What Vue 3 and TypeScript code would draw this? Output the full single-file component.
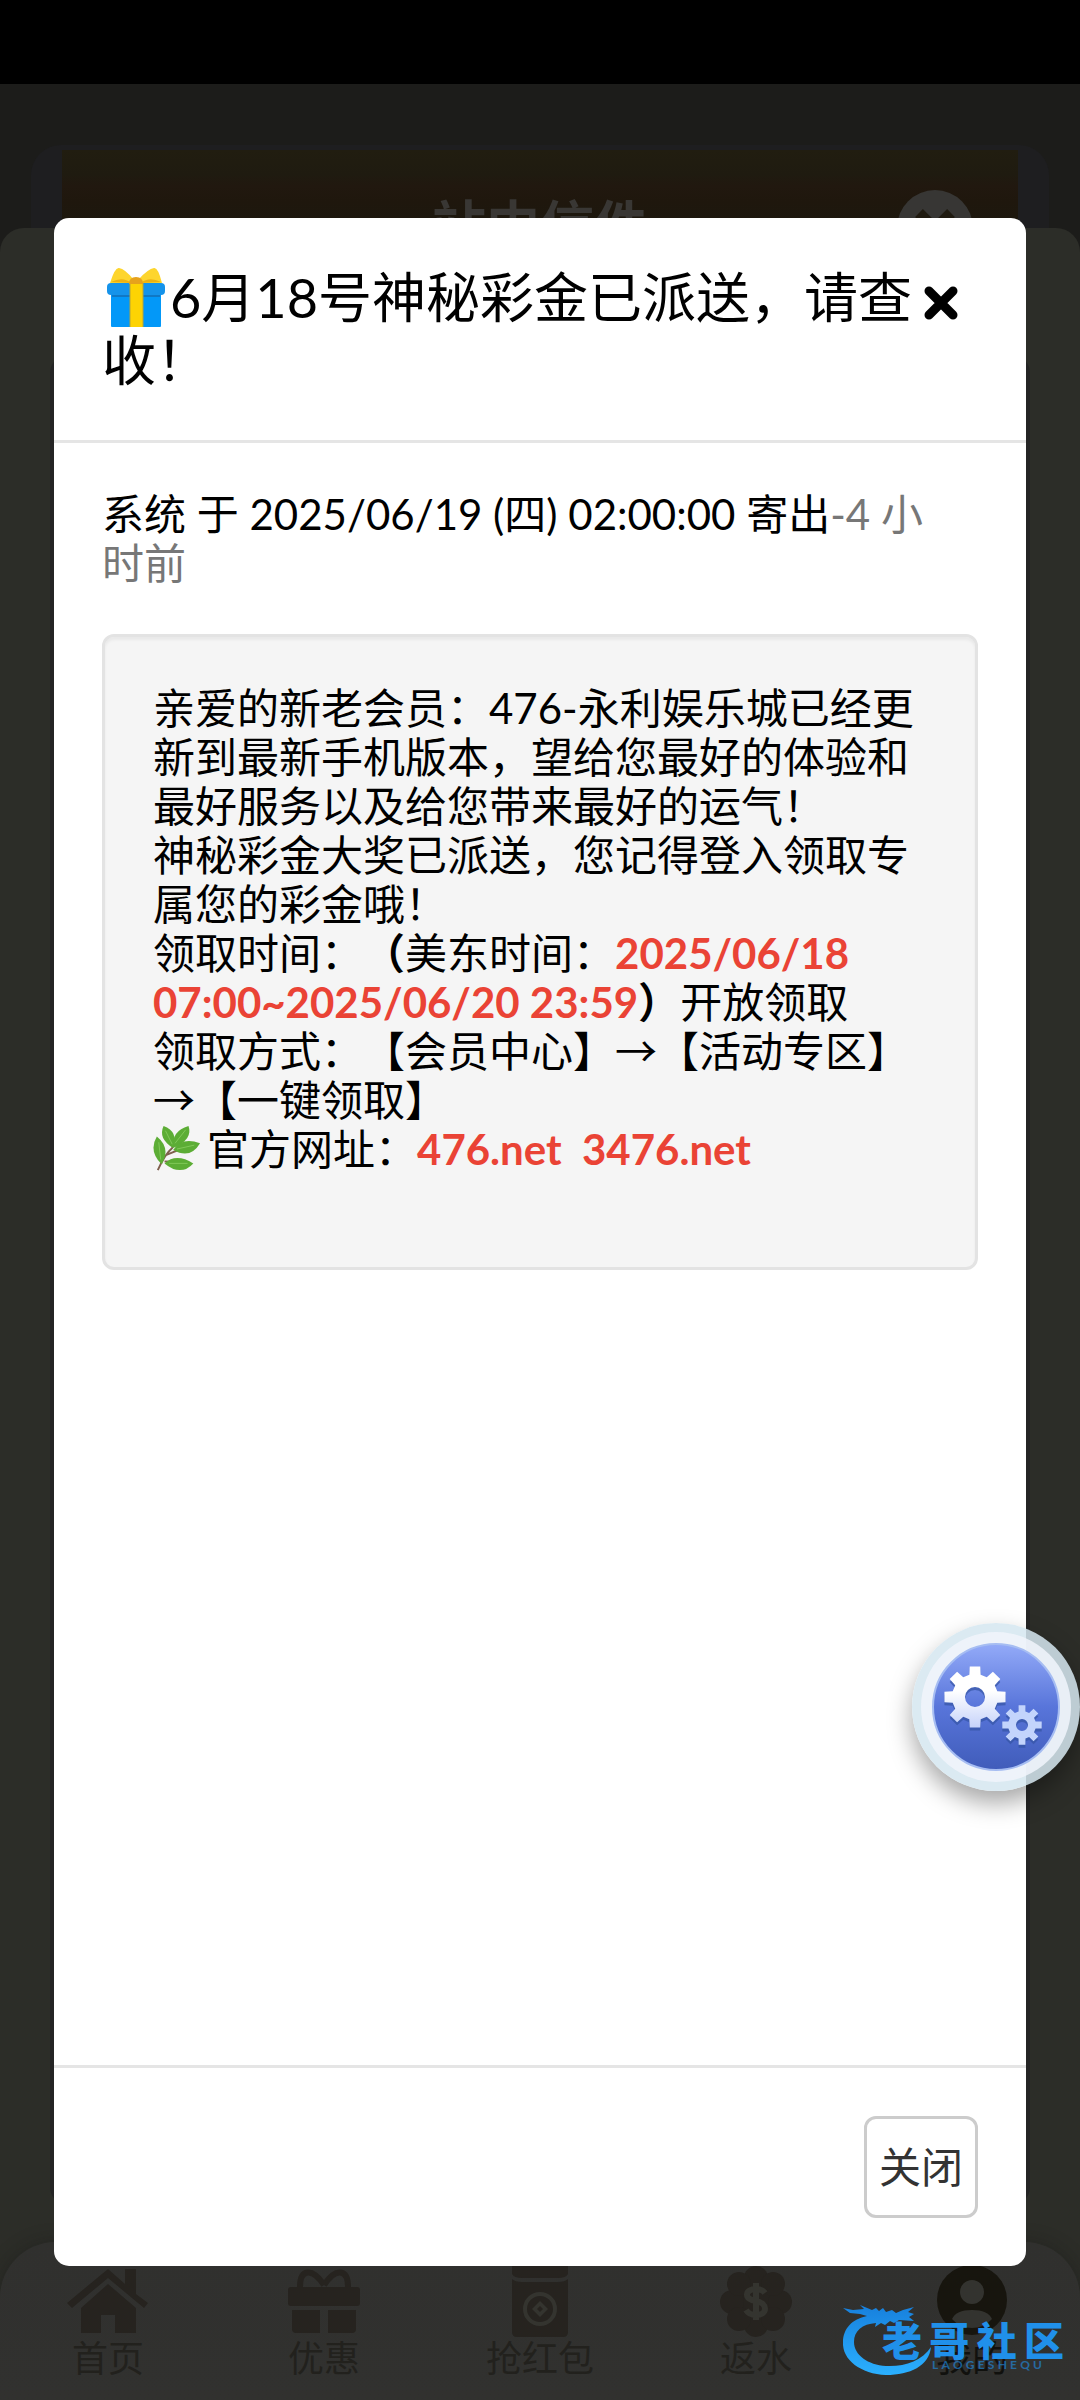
<script setup lang="ts">
interface NavItem {
  key: string
  label: string
  active?: boolean
}

const navItems: NavItem[] = [
  { key: 'home', label: '首页' },
  { key: 'gift', label: '优惠' },
  { key: 'packet', label: '抢红包' },
  { key: 'rebate', label: '返水' },
  { key: 'me', label: '我的', active: true },
]

const brandChars: string[] = [...'老哥社区']
const brandLatin: string[] = [...'LAOGESHEQU']

// Outline of a toothed wheel with a round hole in the middle
function gear(cx: number, cy: number, outer: number, root: number, hole: number): string {
  const teeth = 8
  const pts: string[] = []
  const at = (r: number, a: number) =>
    `${(cx + r * Math.sin(a)).toFixed(2)} ${(cy - r * Math.cos(a)).toFixed(2)}`
  for (let i = 0; i < teeth; i++) {
    const a = (i * 2 * Math.PI) / teeth
    pts.push(at(root, a - 0.25), at(outer, a - 0.17), at(outer, a + 0.17), at(root, a + 0.25))
  }
  return (
    `M${pts.join('L')}Z` +
    `M${cx - hole} ${cy}a${hole} ${hole} 0 1 0 ${hole * 2} 0a${hole} ${hole} 0 1 0 ${-hole * 2} 0Z`
  )
}

const bigGear = gear(63, 74, 31, 23, 10)
const smallGear = gear(110, 102, 20, 14, 6)
</script>

<template>
  <div class="screen">
    <div class="page">
      <div class="status"></div>
      <header class="mail">
        <div class="mail-bar">
          <h1>站内信件</h1>
          <button class="mail-close" type="button" aria-label="关闭信件">
            <svg viewBox="0 0 76 76" width="76" height="76">
              <circle cx="38" cy="38" r="38" fill="#373634" />
              <path d="M22 23L54 55M54 23L22 55" stroke="#1f1a10" stroke-width="11" />
            </svg>
          </button>
        </div>
      </header>
      <main class="sheet">
        <div class="card"></div>
        <nav class="nav">
          <a v-for="n in navItems" :key="n.key" href="#" :class="{ active: n.active }">
            <svg v-if="n.key === 'home'" viewBox="0 0 84 72" width="84" height="72">
              <path d="M42 3L59 18V3H70V28L82 37L78 42L42 12L6 42L1 37Z" />
              <path d="M42 18L70 42V67H49V49H35V67H15V42Z" />
            </svg>
            <svg v-else-if="n.key === 'gift'" viewBox="0 0 84 72" width="84" height="72">
              <path d="M42 19C30 1 18 3 18 21M42 19C54 1 66 3 66 21" fill="none" stroke="#26231f" stroke-width="6" />
              <rect x="6" y="21" width="72" height="19" rx="3" />
              <path d="M10 44H38V67H14Q10 67 10 63ZM46 44H74V63Q74 67 70 67H46Z" />
            </svg>
            <svg v-else-if="n.key === 'packet'" viewBox="0 0 84 72" width="84" height="72">
              <path d="M14 0H70V8Q68 12 60 12H24Q16 12 14 8Z" />
              <path d="M14 13Q17 16 24 16H60Q67 16 70 13V66Q70 71 65 71H19Q14 71 14 66Z" />
              <circle cx="42" cy="43" r="15" fill="none" stroke="#34342f" stroke-width="4" />
              <path d="M42 35L50 43L42 51L34 43Z" fill="#34342f" />
              <path d="M42 40L45 43L42 46L39 43Z" />
            </svg>
            <svg v-else-if="n.key === 'rebate'" viewBox="0 0 84 72" width="84" height="72">
              <circle cx="42" cy="35" r="28" />
              <circle cx="42" cy="12" r="12" />
              <circle cx="42" cy="59" r="12" />
              <circle cx="18" cy="36" r="12" />
              <circle cx="66" cy="36" r="12" />
              <circle cx="25" cy="18" r="12" />
              <circle cx="59" cy="18" r="12" />
              <circle cx="25" cy="53" r="12" />
              <circle cx="59" cy="53" r="12" />
              <path d="M51 27Q48 23 42 23C30 23 30 34 42 35C54 37 54 49 42 49Q35 49 32 44M42 17V54" fill="none" stroke="#34342f" stroke-width="6" />
            </svg>
            <svg v-else viewBox="0 0 84 72" width="84" height="72">
              <circle cx="42" cy="34" r="35" />
              <circle cx="42" cy="26" r="12" fill="#33332f" />
              <path d="M22 53Q26 44 42 44Q58 44 62 53Q54 62 42 62Q30 62 22 53Z" fill="#33332f" />
            </svg>
            <span>{{ n.label }}</span>
          </a>
        </nav>
      </main>
    </div>

    <section class="modal" role="dialog" aria-labelledby="mail-title">
      <div class="modal-head">
        <h2 id="mail-title">
          <svg class="gift" viewBox="0 0 60 60" width="60" height="60" role="img" aria-label="礼物">
            <rect x="5" y="22" width="50" height="38" rx="1" fill="#0398f8" />
            <rect x="1" y="16" width="58" height="12" rx="4" fill="#1593ea" />
            <rect x="6" y="28" width="48" height="2" fill="#1078c4" />
            <rect x="24" y="14" width="13" height="46" fill="#fdd303" />
            <path d="M24 16V60M37 16V60" stroke="#b5a43a" stroke-width="1" />
            <path d="M27 12Q19 2 13 1Q9 0 4 16H27ZM33 12Q42 2 48 1Q52 0 56 16H33Z" fill="#fdd52d" />
            <path d="M5 15Q17 9 25 16ZM55 15Q43 9 35 16Z" fill="#eeb211" />
            <path d="M23 17Q23 10 30 10Q37 10 37 17Z" fill="#e6a21c" />
          </svg>6月18号神秘彩金已派送，请查<br />收！
        </h2>
        <button class="close" type="button" aria-label="关闭">
          <svg viewBox="0 0 34 34" width="34" height="34">
            <path d="M5 5L29 29M29 5L5 29" stroke="#000" stroke-width="9" stroke-linecap="round" />
          </svg>
        </button>
      </div>

      <div class="modal-body">
        <p class="meta">系统 于 2025/06/19 (四) 02:00:00 寄出<span>-4 小<br />时前</span></p>
        <div class="well">
          亲爱的新老会员：476-永利娱乐城已经更<br />
          新到最新手机版本，望给您最好的体验和<br />
          最好服务以及给您带来最好的运气！<br />
          神秘彩金大奖已派送，您记得登入领取专<br />
          属您的彩金哦！<br />
          领取时间：<b>（</b>美东时间：<strong>2025/06/18</strong><br />
          <strong>07:00~2025/06/20 23:59</strong><b>）</b>开放领取<br />
          领取方式：【会员中心】<i>→</i>【活动专区】<br />
          <i>→</i>【一键领取】<br />
          <svg class="leaf" viewBox="0 0 50 50" width="48" height="48" role="img" aria-label="香草">
            <path d="M5 47Q12 31 20 24Q22 20 22 17M14 31Q30 24 45 20M12 38Q24 38 36 39M6 27Q9 36 9 40" fill="none" stroke="#80604f" stroke-width="2" />
            <g fill="#5cad35">
              <path d="M21 24Q5 14 11 1Q27 7 21 24Z" />
              <path d="M21 24Q19 6 37 1Q42 15 21 24Z" />
              <path d="M21 26Q30 12 49 19Q39 36 21 26Z" />
              <path d="M12 40Q24 29 42 40Q29 54 12 40Z" />
              <path d="M9 41Q-5 27 4 12Q19 24 9 41Z" />
            </g>
            <path d="M20 20L13 6M23 19L34 5M25 25L43 21M17 40H36M8 36L6 18" stroke="#82c95a" stroke-width="1" />
          </svg>官方网址：<strong>476.net&nbsp; 3476.net</strong>
        </div>
      </div>

      <div class="modal-foot">
        <button class="btn" type="button">关闭</button>
      </div>
    </section>

    <button class="float" type="button" aria-label="设置">
      <svg viewBox="0 0 168 168" width="168" height="168">
        <defs>
          <linearGradient id="disc" x1="0" y1="0" x2="0" y2="1">
            <stop offset="0" stop-color="#93aaf8" />
            <stop offset="0.5" stop-color="#5875da" />
            <stop offset="1" stop-color="#405cba" />
          </linearGradient>
          <linearGradient id="steel" x1="0" y1="0" x2="0" y2="1">
            <stop offset="0.4" stop-color="#fff" />
            <stop offset="1" stop-color="#c5d2fa" />
          </linearGradient>
        </defs>
        <circle cx="84" cy="84" r="84" fill="#d5e7f0" fill-opacity="0.86" />
        <circle cx="84" cy="84" r="75" fill="#f1f5fb" fill-opacity="0.85" />
        <circle cx="84" cy="84" r="63" fill="url(#disc)" stroke="#a6bdf2" stroke-width="2" />
        <g transform="translate(0 3)" fill="#3454a4" fill-opacity="0.7" fill-rule="evenodd">
          <path :d="bigGear" />
          <path :d="smallGear" />
        </g>
        <path :d="bigGear" fill="url(#steel)" fill-rule="evenodd" />
        <path :d="smallGear" fill="#c3d4fc" fill-rule="evenodd" />
      </svg>
    </button>

    <div class="brand">
      <svg viewBox="0 0 110 84" width="110" height="84">
        <defs>
          <linearGradient id="dragon" x1="0" y1="0" x2="0" y2="1">
            <stop offset="0" stop-color="#1780dd" />
            <stop offset="1" stop-color="#2bb0ff" />
          </linearGradient>
        </defs>
        <path fill="url(#dragon)" d="M1 4L11 6L22 5L18 1L30 6L34 4L37 7L41 4L44 8L50 6L54 9L61 6L72 3L66 8L72 10L67 13L72 17L57 16L52 19L48 17L43 21L39 19L33 23L34 19C20 20 12 27 12 38C12 51 26 61 44 62C62 63 80 57 89 43C87 62 68 71 44 71C19 70 0 56 1 38C1 25 10 15 25 12L18 10L8 9Z" />
      </svg>
      <div class="brand-text">
        <div class="brand-cn"><span v-for="(c, i) in brandChars" :key="i">{{ c }}</span></div>
        <div class="brand-en"><span v-for="(c, i) in brandLatin" :key="i">{{ c }}</span></div>
      </div>
    </div>
  </div>
</template>

<style>
body {
  background: #000;
}
</style>

<style scoped>
.screen {
  position: relative;
  display: flex;
  flex-direction: column;
  min-height: 100vh;
  box-sizing: border-box;
  padding: 218px 5% 134px;
  font-family: Lato, "Noto Sans CJK SC", sans-serif;
  font-size: 42px;
  line-height: 49px;
  text-spacing-trim: space-all;
  color: #000;
}
h1, h2, p {
  margin: 0;
  font-weight: 400;
}
button {
  margin: 0;
  padding: 0;
  border: 0;
  background: none;
  font: inherit;
  color: inherit;
}
svg {
  display: block;
}
.page {
  position: absolute;
  inset: 0;
  display: flex;
  flex-direction: column;
  background: #1c1c1a;
}
.status {
  height: 84px;
  background: #000;
}
.mail {
  height: 83px;
  box-sizing: border-box;
  margin: 61px 31px 0;
  padding-top: 5px;
  border-radius: 30px 30px 0 0;
  background: #1e1e20;
}
.mail-bar {
  position: relative;
  display: flex;
  align-items: center;
  justify-content: center;
  height: 150px;
  margin: 0 31px;
  background: linear-gradient(#211d10, #1f1b10 16%, #21180f 24%, #1f170d 34%, #1c180e 50%);
}
.mail-bar h1 {
  font-size: 54px;
  font-weight: 700;
  color: #393734;
}
.mail-close {
  position: absolute;
  right: 45px;
  top: 40px;
}
.sheet {
  flex: 1;
  display: flex;
  flex-direction: column;
  border-radius: 24px 24px 0 0;
  background: #2c2d28;
}
.card {
  flex: 1;
  margin: 127px 50px 37px;
  border-radius: 18px;
  background: #242424;
}
.nav {
  display: flex;
  height: 158px;
  box-sizing: border-box;
  padding-top: 24px;
  border-radius: 56px 56px 0 0;
  background: linear-gradient(#30302e, #31312f);
  box-shadow: 0 0 18px rgba(20, 20, 20, 0.35);
}
.nav a {
  flex: 1;
  display: flex;
  flex-direction: column;
  align-items: center;
  color: #22211d;
  fill: #26231f;
  font-size: 36px;
  line-height: 40px;
  text-decoration: none;
}
.nav a.active {
  color: #11110e;
  fill: #17150e;
}
.modal {
  position: relative;
  flex: 1;
  display: flex;
  flex-direction: column;
  border-radius: 15px;
  background: #fff;
}
.modal-head {
  display: flex;
  padding: 48px;
  border-bottom: 3px solid #e5e5e5;
}
.modal-head h2 {
  flex: 1;
  font-size: 54px;
  line-height: 63px;
}
.gift {
  display: inline-block;
  margin: 0 4px;
  vertical-align: -9px;
}
.close {
  align-self: flex-start;
  padding: 20px 20px 8px 10px;
}
.modal-body {
  flex: 1;
  padding: 47px 48px;
}
.meta span {
  color: #777;
}
.well {
  margin-top: 46px;
  padding: 47px 0 93px 48px;
  border: 3px solid #e3e3e3;
  border-radius: 12px;
  background: #f5f5f5;
  box-shadow: inset 0 3px 3px rgba(0, 0, 0, 0.05);
}
.well strong {
  font-weight: 700;
  color: #ea4335;
}
.well i {
  font-family: "Noto Sans CJK SC", sans-serif;
  font-style: normal;
  line-height: 1px;
}
.leaf {
  display: inline-block;
  margin-right: 6px;
  vertical-align: -8px;
}
.modal-foot {
  display: flex;
  justify-content: flex-end;
  padding: 48px;
  border-top: 3px solid #e5e5e5;
}
.btn {
  height: 102px;
  padding: 0 12px;
  border: 3px solid #ccc;
  border-radius: 12px;
  background: #fff;
  color: #333;
}
.float {
  position: absolute;
  right: 0;
  bottom: 609px;
  border-radius: 50%;
  box-shadow: 0 12px 24px rgba(0, 0, 0, 0.35);
}
.brand {
  position: absolute;
  right: 16px;
  bottom: 20px;
  display: flex;
  width: 222px;
  height: 76px;
}
.brand svg {
  position: absolute;
  left: 0;
  top: 0;
}
.brand-text {
  width: 182px;
  margin-left: auto;
  color: #2090ea;
}
.brand-cn {
  display: flex;
  justify-content: space-between;
  padding-top: 20px;
  font-size: 40px;
  font-weight: 900;
  line-height: 34px;
}
.brand-en {
  display: flex;
  justify-content: space-between;
  padding: 0 22px 0 50px;
  font-size: 12px;
  font-weight: 700;
  line-height: 14px;
  opacity: 0.6;
}
</style>
